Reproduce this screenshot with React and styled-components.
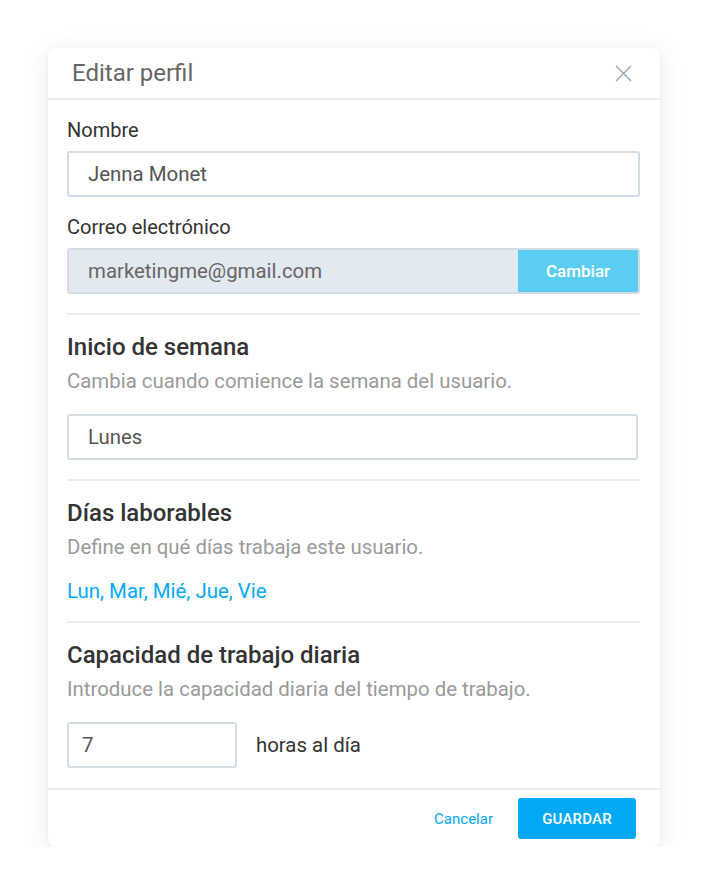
import styled, { createGlobalStyle } from 'styled-components'

const GlobalStyle = createGlobalStyle`
  html, body {
    margin: 0;
    padding: 0;
    background: #ffffff;
    font-family: Roboto, 'Liberation Sans', sans-serif;
  }
`

const Page = styled.div`
  padding: 48px 48px 0 48px;
`

const Card = styled.div`
  width: 612px;
  background: #fff;
  border-radius: 8px;
  box-shadow: 0 4px 24px rgba(40, 60, 80, 0.1), 0 1px 4px rgba(40, 60, 80, 0.05);
  overflow: hidden;
`

const Header = styled.div`
  height: 50px;
  display: flex;
  align-items: center;
  justify-content: space-between;
  padding: 0 28px 0 24px;
  border-bottom: 2px solid #e8edf2;
`

const Title = styled.h2`
  margin: 0;
  font-size: 24px;
  font-weight: 400;
  color: #666;
`

const CloseButton = styled.button`
  border: 0;
  background: none;
  padding: 0;
  width: 17px;
  height: 17px;
  display: flex;
  cursor: pointer;
`

const Body = styled.div`
  padding: 0 20px 0 19px;
`

const Section = styled.div`
  padding: 19px 0 ${(p) => p.bottom || 19}px;
  border-bottom: ${(p) => (p.last ? 'none' : '2px solid #e8edf2')};
`

const Label = styled.div`
  font-size: 20px;
  line-height: 22px;
  color: #333;
  margin-bottom: 10px;
`

const Heading = styled.div`
  font-size: 24px;
  line-height: 26px;
  font-weight: 500;
  color: #333;
  margin-bottom: 10px;
`

const Sub = styled.div`
  font-size: 20.4px;
  line-height: 22px;
  color: #9a9a9a;
  margin-bottom: ${(p) => p.gap || 22}px;
`

const Input = styled.input`
  box-sizing: border-box;
  width: ${(p) => p.width || '100%'};
  height: 46px;
  border: 2px solid #d3dde6;
  border-radius: 3px;
  padding: 0 ${(p) => p.pad || 19}px;
  font-family: inherit;
  font-size: 20.4px;
  color: #555;
  background: #fff;
  outline: none;
  margin-bottom: ${(p) => p.gap || 0}px;
`

const EmailField = styled.div`
  display: flex;
  height: 46px;
  border: 2px solid #d3dde6;
  border-radius: 3px;
  background: #e2e9f0;
  box-sizing: border-box;
  overflow: hidden;
`

const EmailText = styled.div`
  flex: 1;
  display: flex;
  align-items: center;
  padding: 0 19px;
  font-size: 20.4px;
  color: #666;
`

const ChangeButton = styled.button`
  width: 120px;
  border: 0;
  background: #5bcdf3;
  color: #fff;
  font-family: inherit;
  font-size: 17px;
  font-weight: 500;
  cursor: pointer;
`

const Link = styled.a`
  display: block;
  font-size: 20.4px;
  line-height: 22px;
  color: #03a9f4;
  text-decoration: none;
  cursor: pointer;
`

const Row = styled.div`
  display: flex;
  align-items: center;
  gap: 19px;
`

const Unit = styled.span`
  font-size: 20.4px;
  color: #333;
`

const Footer = styled.div`
  display: flex;
  justify-content: flex-end;
  align-items: center;
  gap: 25px;
  padding: 8px 24px 8px;
  border-top: 2px solid #e8edf2;
`

const TextButton = styled.button`
  border: 0;
  background: none;
  color: #03a9f4;
  font-family: inherit;
  font-size: 15px;
  cursor: pointer;
  padding: 0;
`

const PrimaryButton = styled.button`
  width: 118px;
  height: 41px;
  border: 0;
  border-radius: 3px;
  background: #03a9f4;
  color: #fff;
  font-family: inherit;
  font-size: 15px;
  font-weight: 500;
  letter-spacing: 0.2px;
  cursor: pointer;
`

function CloseIcon() {
  return (
    <svg width='17' height='17' viewBox='0 0 17 17'>
      <path d='M1 1 L16 16 M16 1 L1 16' stroke='#91a4b5' strokeWidth='1.4' fill='none' />
    </svg>
  )
}

export default function App() {
  return (
    <>
      <GlobalStyle />
      <Page>
        <Card>
          <Header>
            <Title>Editar perfil</Title>
            <CloseButton aria-label='Cerrar'>
              <CloseIcon />
            </CloseButton>
          </Header>
          <Body>
            {/* nombre y correo */}
            <Section>
              <Label>Nombre</Label>
              <Input defaultValue='Jenna Monet' gap={19} />
              <Label>Correo electrónico</Label>
              <EmailField>
                <EmailText>marketingme@gmail.com</EmailText>
                <ChangeButton>Cambiar</ChangeButton>
              </EmailField>
            </Section>
            {/* inicio de semana */}
            <Section>
              <Heading>Inicio de semana</Heading>
              <Sub>Cambia cuando comience la semana del usuario.</Sub>
              <Input defaultValue='Lunes' width='571px' />
            </Section>
            {/* dias laborables */}
            <Section>
              <Heading>Días laborables</Heading>
              <Sub gap={22}>Define en qué días trabaja este usuario.</Sub>
              <Link>Lun, Mar, Mié, Jue, Vie</Link>
            </Section>
            {/* capacidad */}
            <Section last bottom={20}>
              <Heading>Capacidad de trabajo diaria</Heading>
              <Sub gap={22}>Introduce la capacidad diaria del tiempo de trabajo.</Sub>
              <Row>
                <Input defaultValue='7' width='170px' pad={13} />
                <Unit>horas al día</Unit>
              </Row>
            </Section>
          </Body>
          <Footer>
            <TextButton>Cancelar</TextButton>
            <PrimaryButton>GUARDAR</PrimaryButton>
          </Footer>
        </Card>
      </Page>
    </>
  )
}
